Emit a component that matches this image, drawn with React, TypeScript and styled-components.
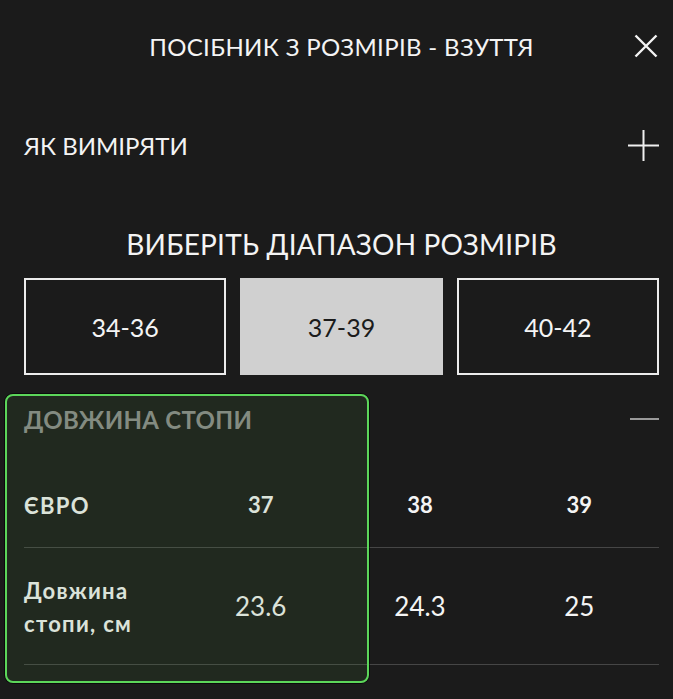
import styled, { createGlobalStyle } from 'styled-components';

const GlobalStyle = createGlobalStyle`
  html, body {
    margin: 0;
    padding: 0;
    background: #1b1b1b;
  }
  * {
    box-sizing: border-box;
  }
`;

const ranges = ['34-36', '37-39', '40-42'];
const selectedRange = '37-39';

const rows = [
  { label: 'ЄВРО', values: ['37', '38', '39'], strong: true, height: 86 },
  { label: 'Довжина\nстопи, см', values: ['23.6', '24.3', '25'], strong: false, height: 117 },
];

const Page = styled.div`
  width: 673px;
  height: 699px;
  overflow: hidden;
  padding: 0 14px 0 24px;
  background: #1b1b1b;
  color: #f4f4f4;
  font-family: Lato, 'Liberation Sans', sans-serif;
`;

const Header = styled.header`
  height: 92px;
  display: grid;
  grid-template-columns: 1fr auto 1fr;
  align-items: center;
`;

const Title = styled.h1`
  grid-column: 2;
  margin: 0;
  font-size: 24px;
  font-weight: 400;
  letter-spacing: 0.35px;
  white-space: nowrap;
`;

const IconButton = styled.button`
  grid-column: 3;
  justify-self: end;
  margin-right: 1px;
  display: flex;
  align-items: center;
  justify-content: center;
  padding: 0;
  border: 0;
  background: none;
  color: inherit;
  cursor: pointer;
`;

const AccordionRow = styled.div`
  height: 106px;
  display: flex;
  align-items: center;
  justify-content: space-between;
`;

const AccordionLabel = styled.span`
  font-size: 24px;
  font-weight: 400;
  padding-top: 1px;
`;

const SectionTitle = styled.h2`
  margin: 28px 0 16px;
  line-height: 36px;
  text-align: center;
  font-size: 28px;
  font-weight: 400;
  letter-spacing: 0.2px;
`;

const RangeGrid = styled.div`
  display: grid;
  grid-template-columns: repeat(3, 1fr);
  gap: 14px;
`;

const RangeButton = styled.button<{ $active?: boolean }>`
  height: 97px;
  border: 2px solid ${(p) => (p.$active ? '#d0d0d0' : '#ececec')};
  background: ${(p) => (p.$active ? '#d0d0d0' : 'transparent')};
  color: ${(p) => (p.$active ? '#1b1b1b' : '#f4f4f4')};
  font-family: inherit;
  font-size: 25px;
  font-weight: 400;
  cursor: pointer;
`;

const Table = styled.section`
  position: relative;
  margin-top: 20px;
`;

const TableHeader = styled.div`
  height: 48px;
  margin-bottom: 19px;
  display: flex;
  align-items: center;
  justify-content: space-between;
`;

const TableTitle = styled.span`
  font-size: 24px;
  font-weight: 700;
  letter-spacing: 0.3px;
  color: #8d8d8d;
`;

const Row = styled.div<{ $height: number }>`
  min-height: ${(p) => p.$height}px;
  display: grid;
  grid-template-columns: 157px repeat(3, 1fr);
  align-items: center;
  border-bottom: 1.5px solid #464646;
`;

const RowLabel = styled.span`
  font-size: 22px;
  font-weight: 700;
  line-height: 33px;
  padding-top: 2px;
  white-space: pre-line;
  letter-spacing: 1.3px;
`;

const Cell = styled.span<{ $strong?: boolean }>`
  text-align: center;
  font-size: ${(p) => (p.$strong ? '22px' : '26px')};
  font-weight: ${(p) => (p.$strong ? 700 : 400)};
`;

/* highlight frame laid over the first column of the table */
const Highlight = styled.div`
  position: absolute;
  left: -19px;
  top: -1px;
  width: 364px;
  height: 289px;
  border: 2px solid #5cd65a;
  border-radius: 8px;
  background: rgba(70, 130, 60, 0.14);
  box-shadow: 0 0 0 1px rgba(0, 0, 0, 0.6);
  pointer-events: none;
`;

const CloseIcon = () => (
  <svg width="24" height="24" viewBox="0 0 24 24">
    <path d="M1.5 1.5 L22.5 22.5 M22.5 1.5 L1.5 22.5" stroke="#f4f4f4" strokeWidth="2.4" fill="none" />
  </svg>
);

const PlusIcon = () => (
  <svg width="31" height="31" viewBox="0 0 31 31">
    <path d="M0 15.5 H31 M15.5 0 V31" stroke="#f0f0f0" strokeWidth="2" fill="none" />
  </svg>
);

const MinusIcon = () => (
  <svg width="29" height="4" viewBox="0 0 29 4">
    <path d="M0 2 H29" stroke="#9a9a9a" strokeWidth="2" fill="none" />
  </svg>
);

export default function App() {
  return (
    <>
      <GlobalStyle />
      <Page>
        <Header>
          <Title>ПОСІБНИК З РОЗМІРІВ - ВЗУТТЯ</Title>
          <IconButton aria-label="close">
            <CloseIcon />
          </IconButton>
        </Header>

        <AccordionRow>
          <AccordionLabel>ЯК ВИМІРЯТИ</AccordionLabel>
          <PlusIcon />
        </AccordionRow>

        <SectionTitle>ВИБЕРІТЬ ДІАПАЗОН РОЗМІРІВ</SectionTitle>
        <RangeGrid>
          {ranges.map((r) => (
            <RangeButton key={r} $active={r === selectedRange}>
              {r}
            </RangeButton>
          ))}
        </RangeGrid>

        <Table>
          <TableHeader>
            <TableTitle>ДОВЖИНА СТОПИ</TableTitle>
            <MinusIcon />
          </TableHeader>
          {rows.map((row) => (
            <Row key={row.label} $height={row.height}>
              <RowLabel>{row.label}</RowLabel>
              {row.values.map((v) => (
                <Cell key={v} $strong={row.strong}>
                  {v}
                </Cell>
              ))}
            </Row>
          ))}
          <Highlight />
        </Table>
      </Page>
    </>
  );
}
